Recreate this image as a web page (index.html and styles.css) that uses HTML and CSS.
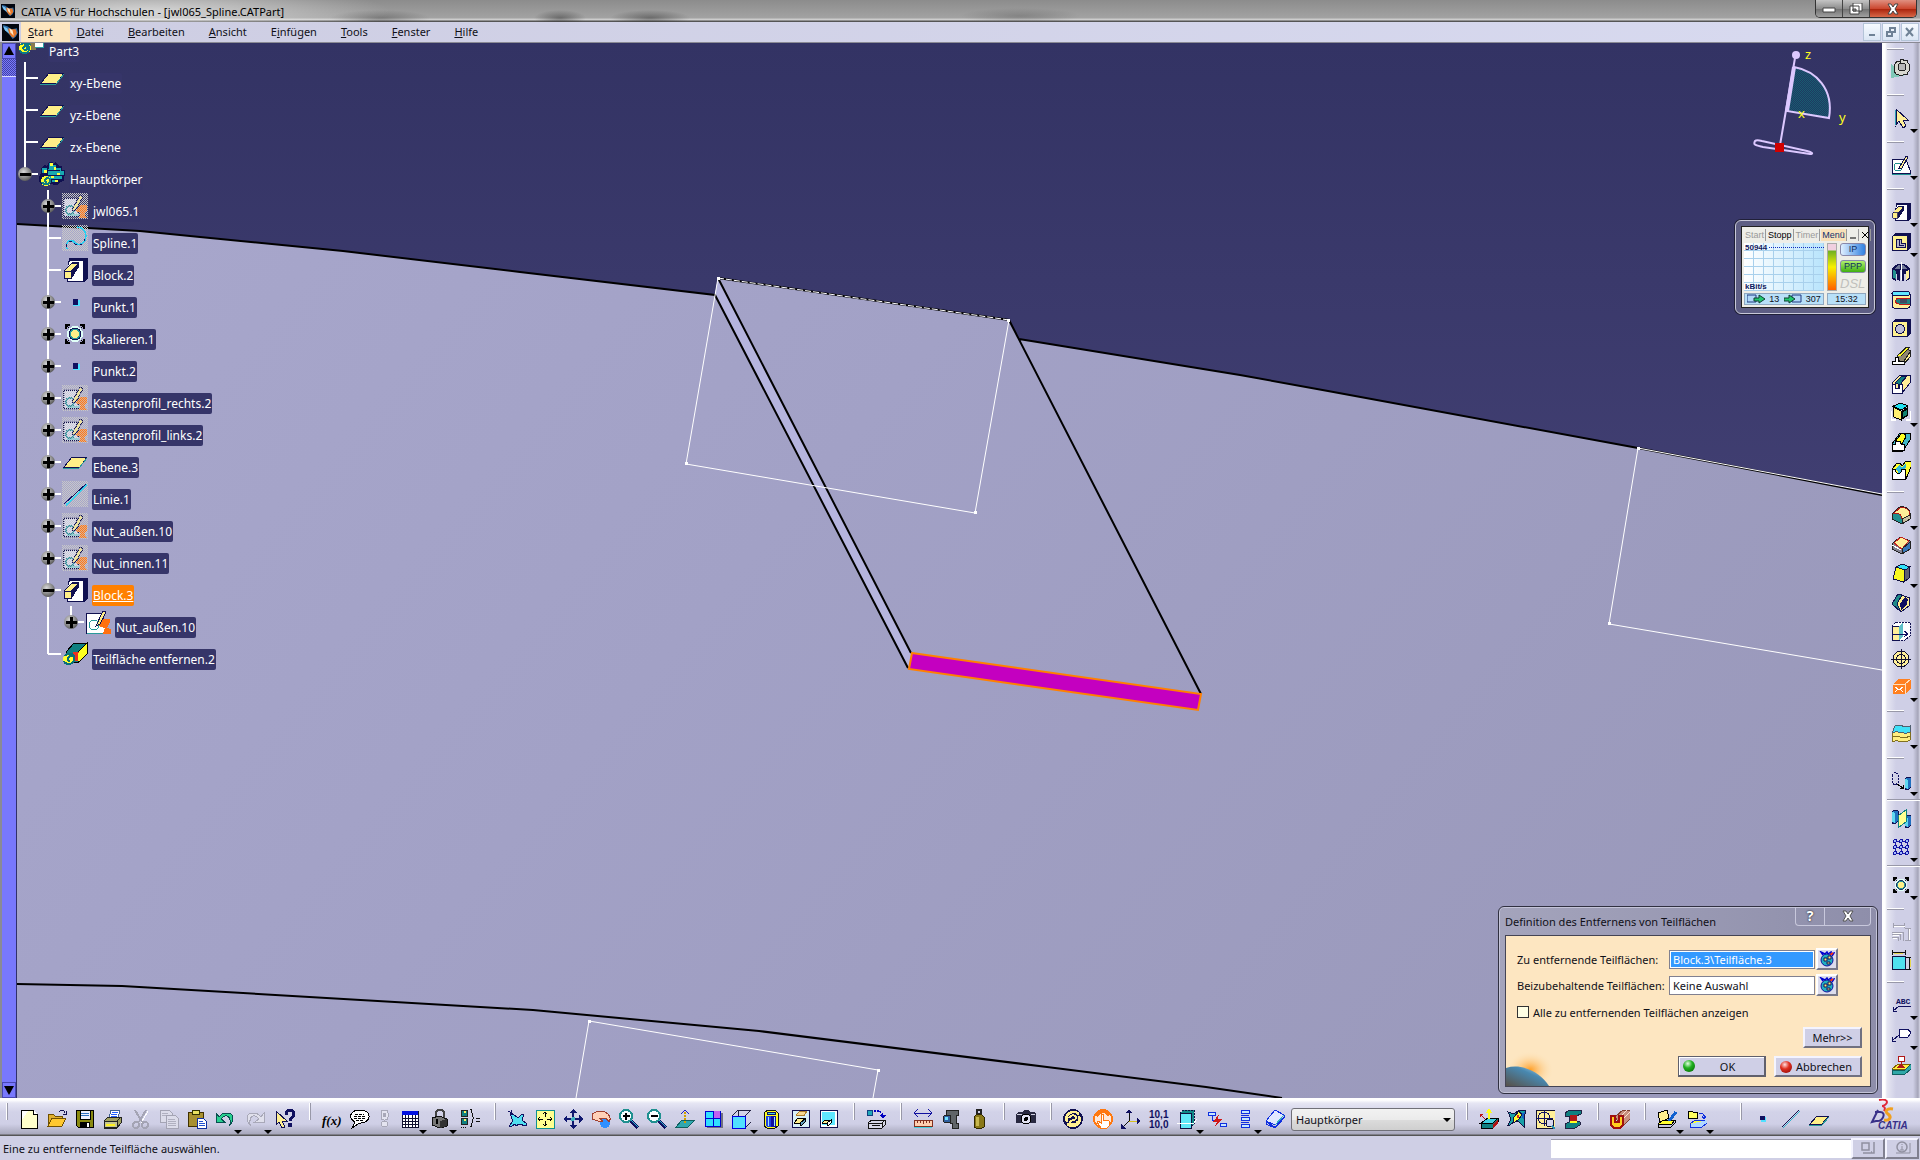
FILE: index.html
```html
<!DOCTYPE html>
<html lang="de">
<head>
    <meta charset="UTF-8">
    <meta name="viewport" content="width=device-width, initial-scale=1.0">
    <title>CATIA V5 für Hochschulen - [jwl065_Spline.CATPart]</title>
    <link rel="stylesheet" href="styles.css">
</head>
<body>
    <!-- Symbole -->
    <svg class="sprite" aria-hidden="true">
        <defs>
            <linearGradient id="g-orb" x1="0" y1="0" x2="1" y2="1"><stop offset="0" stop-color="#3a6ea8"/><stop offset=".45" stop-color="#e8f0ff"/><stop offset=".6" stop-color="#e07020"/><stop offset="1" stop-color="#180800"/></linearGradient>
            <radialGradient id="g-ball" cx=".4" cy=".35" r=".7"><stop offset="0" stop-color="#d8d8d8"/><stop offset="1" stop-color="#555"/></radialGradient>
            <pattern id="p-mesh" width="2" height="2" patternUnits="userSpaceOnUse"><rect width="1" height="1" fill="#c8c8c8"/><rect x="1" y="1" width="1" height="1" fill="#c8c8c8"/></pattern>
            <pattern id="p-teal" width="2" height="2" patternUnits="userSpaceOnUse"><rect width="2" height="2" fill="#1c3c62"/><rect width="1" height="1" fill="#1a5a70"/><rect x="1" y="1" width="1" height="1" fill="#1a5a70"/></pattern>
        </defs>
        <symbol id="i-app" viewBox="0 0 16 16"><path d="M0 0h16v16H0z" fill="#02060f"/><path d="M1 1l4 1 4 3 5-1 1 4-2 4-3 2-3-4-5-5z" fill="#2c6ca8"/><path d="M6 4l3 1 4 0 1 4-3 4-2-1-3-4z" fill="#e87828"/><path d="M7 4l3 2 1 5-3-3z" fill="#ffe8c8"/><path d="M1 2l4 2 2 5-4-3z" fill="#7cc4f0"/></symbol>
        <symbol id="i-plus" viewBox="0 0 14 14"><circle cx="7" cy="7" r="7" fill="url(#g-ball)"/><path d="M2 6h4V2h3v4h4v3H9v4H6V9H2z" fill="#000"/></symbol>
        <symbol id="i-minus" viewBox="0 0 14 14"><circle cx="7" cy="7" r="7" fill="url(#g-ball)"/><path d="M2 6h11v3H2z" fill="#000"/></symbol>

        <!-- Baum -->
        <symbol id="t-part" viewBox="0 0 26 26"><path d="M2 6h10v9H2z" fill="#ffef90"/><path d="M12 8h6v9h-6z" fill="#8a7a50"/><path d="M17 3h9v11h-9z" fill="#fff"/><path d="M17 14h9v1h-9zM25 5h1v10h-1z" fill="#2aa0a0"/><circle cx="7" cy="15" r="6" fill="#ffff20"/><path d="M2 17c1 4 8 4 9 0s-2-6-4-4-3 3 0 4 2-6-1-7M3 12c2-4 8-3 9 0" fill="none" stroke="#0a7a88" stroke-width="2"/></symbol>
        <symbol id="t-plane" viewBox="0 0 26 26"><path d="M2 18L10 8h15l-7 10z" fill="#ffef88" stroke="#101050"/><path d="M1 19h16l8-10" fill="none" stroke="#2a9a9a"/></symbol>
        <symbol id="t-body" viewBox="0 0 26 26"><path d="M10 1h4v2l3-2 3 4h3v4h3v4l-1 4v3l-4 1-2 3h-4l-3-1-8 1-4-3v-5l2-4V7l3-3 3 1z" fill="#101050"/><path d="M10 2h3v2h4v3h5v3h3v4h-2v4h-5v3h-5v-3H9V8h1zM3 7h5v5H3z" fill="#18a8b0"/><path d="M11 2h3v3h-3zM5 9h3v3H5zM15 6h2v4h-2zM18 12h3v3h-3zM12 14h3v3h-3zM16 18h3v3h-3z" fill="#ffff40"/><path d="M9 9h12v1H9zM9 14h14v1H9zM9 18h12v1H9z" fill="#101050"/><circle cx="7" cy="20" r="5" fill="#ffff30"/><path d="M3 21c1 3 7 3 8 0s-2-5-4-3-1 3 1 3" fill="none" stroke="#108080" stroke-width="2"/></symbol>
        <symbol id="t-hidden" viewBox="0 0 26 26"><path d="M0 0h26v26H0z" fill="url(#p-mesh)"/><path d="M2 5h14v19H2z" fill="#dcdcf0" stroke="#101050" stroke-dasharray="1 1" stroke-width="2"/><path d="M5 21h12v2H5z" fill="#7fd0d8"/><path d="M25 12h-7l-4 6 5 2-2 5h8l-3-5 3-3z" fill="#ff7818"/><circle cx="8" cy="17" r="4" fill="none" stroke="#2890a0" stroke-width="2"/><path d="M10 17l8-15 3 2-8 14z" fill="#ffef88" stroke="#101050"/><path d="M0 0h26v26H0z" fill="url(#p-mesh)" opacity=".7"/></symbol>
        <symbol id="t-sketch" viewBox="0 0 26 26"><path d="M1 4h16l4 20H1z" fill="#fff" stroke="#101050"/><path d="M2 24h22v1H2z" fill="#2a9a9a"/><path d="M25 10h-7l-5 7 7 2-2 6h8v-5l-4-1 3-6z" fill="#ff7010"/><circle cx="9" cy="16" r="5" fill="none" stroke="#2a9a9a"/><path d="M11 17l7-15 3 1-6 12z" fill="#ffef88" stroke="#101050"/></symbol>
        <symbol id="t-spline" viewBox="0 0 26 26"><path d="M0 0h26v26H0z" fill="url(#p-mesh)"/><path d="M5 24c-2-6 2-10 6-8 5 6 12 4 13-5 0-5-4-9-9-9" fill="none" stroke="#28d0f0" stroke-width="1.5"/><path d="M5 22c-1-5 3-7 6-5 5 6 10 3 12-3" fill="none" stroke="#101060" stroke-dasharray="3 3"/></symbol>
        <symbol id="t-pad" viewBox="0 0 26 26"><path d="M7 1h19v21l-4 3H5V14z" fill="#101050"/><path d="M8 4h13v20H6V10z" fill="#fff"/><path d="M2 14l8-9h7v5l-7 11H2z" fill="#101050"/><path d="M3 14l6-7h6l-6 7z" fill="#ffef88"/><path d="M2 14h7v7H2z" fill="#ffef88" stroke="#101050"/></symbol>
        <symbol id="t-point" viewBox="0 0 26 26"><path d="M11 11h7v6h-7z" fill="#50e0ff"/><path d="M11 10h5v6h-5z" fill="#101060"/></symbol>
        <symbol id="t-scale" viewBox="0 0 26 26"><path d="M4 4l18 18M22 4L4 22" stroke="#000"/><path d="M4 8V4h4M18 4h4v4M22 18v4h-4M8 22H4v-4" fill="none" stroke="#000" stroke-width="2"/><circle cx="13" cy="13" r="8" fill="#e0fff8"/><circle cx="13" cy="13" r="6" fill="#2a9a9a" stroke="#101050"/><circle cx="13" cy="13" r="4" fill="#ffef88"/></symbol>
        <symbol id="t-line" viewBox="0 0 26 26"><path d="M0 0h26v26H0z" fill="url(#p-mesh)"/><path d="M4 24L25 4" stroke="#30d8f0" stroke-width="1.5"/><path d="M2 23L24 3" stroke="#101060"/></symbol>
        <symbol id="t-remove" viewBox="0 0 26 26"><path d="M4 11L12 2h13v11l-8 8H4z" fill="#108080" stroke="#000"/><path d="M16 11l9-9v11l-8 8z" fill="#ffff20" stroke="#000"/><path d="M11 11h6v9h-6z" fill="#e83020"/><path d="M16 12h2v8h-2z" fill="#ffff20"/><circle cx="7" cy="18" r="6" fill="#ffff30"/><path d="M2 20c1 4 9 4 10-1s-3-5-5-3-1 4 1 4M3 15c2-3 7-3 9 0" fill="none" stroke="#087078" stroke-width="2"/></symbol>

        <!-- Standard -->
        <symbol id="i-new" viewBox="0 0 20 20"><path d="M2 1h12l4 4v14H2z" fill="#ffffcc" stroke="#000"/><path d="M14 1v4h4" fill="#fff" stroke="#000"/><path d="M3 2h6l-6 9z" fill="#fff"/></symbol>
        <symbol id="i-open" viewBox="0 0 20 20"><path d="M1 17V5h5l2 2h7v4" fill="#e0b030" stroke="#705000"/><path d="M1 17l4-8h14l-4 8z" fill="#ffc830" stroke="#705000"/><path d="M12 3c2-3 5-2 6 1M19 2v3h-3" fill="none" stroke="#101050"/></symbol>
        <symbol id="i-save" viewBox="0 0 20 20"><path d="M1 1h17v17H3l-2-2z" fill="#8a8a10" stroke="#000"/><path d="M5 1h10v9H5z" fill="#eef" stroke="#000"/><path d="M6 4h8M6 6h8" stroke="#3070c0"/><path d="M5 13h10v5H5z" fill="#000"/><path d="M12 14h2v4h-2z" fill="#fff"/></symbol>
        <symbol id="i-print" viewBox="0 0 20 20"><path d="M6 9l2-8h9l-2 8z" fill="#fff" stroke="#406090"/><path d="M9 3h6M8 5h6M8 7h6" stroke="#2060ff"/><path d="M1 12l4-4h13v6l-4 5H1z" fill="#a0a060" stroke="#222"/><path d="M1 12h13v6H1zM14 12l4-4" fill="#c8c890" stroke="#222"/><path d="M3 15h9v2H3z" fill="#fff020"/></symbol>
        <symbol id="i-cut" viewBox="0 0 20 20"><g fill="none" stroke="#fff"><path d="M5 2l7 12M17 2l-7 12"/></g><g fill="none" stroke="#a4a4b4" stroke-width="2"><path d="M4 1l7 12M15 1L8 13"/><circle cx="5" cy="16" r="3"/><circle cx="14" cy="16" r="3"/></g></symbol>
        <symbol id="i-copy" viewBox="0 0 20 20"><g fill="#dcdcea" stroke="#a4a4b4"><path d="M1 1h9l3 3v9H1z"/><path d="M7 6h9l3 3v10H7z"/></g><path d="M3 4h6M3 6h4M9 10h7M9 12h8M9 14h8M9 16h8" stroke="#b0b0c0"/></symbol>
        <symbol id="i-paste" viewBox="0 0 20 20"><path d="M1 3h15v14H1z" fill="#a89030" stroke="#403000"/><path d="M5 1h7v4H5z" fill="#e8e060" stroke="#303000"/><path d="M10 9h6l3 3v7h-9z" fill="#fff" stroke="#1030a0"/><path d="M12 12h4M12 14h6M12 16h6" stroke="#2050d0"/></symbol>
        <symbol id="i-undo" viewBox="0 0 20 20"><path d="M1 4v9h9l-4-3c5-6 10-3 9 5l-1 2c6-6 5-13-2-13-4 0-6 1-8 4z" fill="#28d090" stroke="#085050"/></symbol>
        <symbol id="i-redo" viewBox="0 0 20 20"><path d="M19 4v9h-9l4-3c-5-6-10-3-9 5l1 2C0 11 1 4 8 4c4 0 6 1 8 4z" fill="#e0e0ec" stroke="#a8a8b8"/></symbol>
        <symbol id="i-what" viewBox="0 0 20 20"><path d="M1 2v14l3-3 3 6 3-1-3-6h5z" fill="#ffef90" stroke="#101050"/><path d="M11 6c0-6 8-6 8-1 0 4-4 3-4 7" fill="none" stroke="#101060" stroke-width="3"/><path d="M13 14h4v4h-4z" fill="#101060"/></symbol>

        <!-- Wissen -->
        <symbol id="i-note" viewBox="0 0 20 20"><path d="M10 1c12 0 12 12 1 13l-3 1-6 4 3-6C-3 8 1 1 10 1z" fill="#fff" stroke="#000"/><path d="M5 5h9M4 7h12M4 9h12M6 11h8" stroke="#000" stroke-dasharray="3 1"/></symbol>
        <symbol id="i-lamp" viewBox="0 0 20 20"><g fill="#e4e4f0" stroke="#a8a8b8"><rect x="6" y="1" width="7" height="10" rx="3"/><circle cx="9.500" cy="15" r="3"/></g><path d="M8 4h3v4H8z" fill="#a8a8b8"/></symbol>
        <symbol id="i-table" viewBox="0 0 20 20"><path d="M2 2h16v16H2z" fill="#fff" stroke="#101030"/><path d="M2 2h16v4H2z" fill="#0010e0"/><path d="M2 9h16M2 12h16M2 15h16M5 6v12M8 6v12M12 6v12M15 6v12" stroke="#101030"/></symbol>
        <symbol id="i-lock" viewBox="0 0 20 20"><path d="M6 9V4c0-4 8-4 8 0v6" fill="none" stroke="#444" stroke-width="2"/><path d="M2 9l7-2 8 3v7l-7 2-8-3z" fill="#777" stroke="#111"/><path d="M10 12l7-2v7l-7 2z" fill="#333"/><path d="M6 10h2v5H6z" fill="#000"/></symbol>
        <symbol id="i-list" viewBox="0 0 20 20"><path d="M1 1h6v6H1zM1 9h6v6H1z" fill="#108080" stroke="#222"/><path d="M4 2h2v2H4zM4 10h2v2H4z" fill="#ffef60"/><path d="M1 18h1M3 18h1M5 18h1M10 0c4 0 0 8 4 9-4 1 0 9-4 9M16 9h4M16 12h4" fill="none" stroke="#111"/></symbol>

        <!-- Ansicht -->
        <symbol id="i-fly" viewBox="0 0 20 20"><path d="M3 5l3 0 5 4 4-4h2l-2 6 5 4-1 2-7-2-3 2-1-2-4 3-2-1 4-5z" fill="#50e0f0" stroke="#101060"/><path d="M1 2l5 3M5 1L3 6" stroke="#101060"/></symbol>
        <symbol id="i-fit" viewBox="0 0 20 20"><path d="M1 1h18v18H1z" fill="#ffff90" stroke="#109090"/><path d="M10 3v5M8 5l2-2 2 2M10 17v-5M8 15l2 2 2-2M3 10h5M5 8l-2 2 2 2M17 10h-5M15 8l2 2-2 2" fill="none" stroke="#000"/></symbol>
        <symbol id="i-pan" viewBox="0 0 20 20"><path d="M10 0l4 4h-3v5h5V6l4 4-4 4v-3h-5v5h3l-4 4-4-4h3v-5H4v3l-4-4 4-4v3h5V4H6z" fill="#101870"/><circle cx="10" cy="10" r="2" fill="#40b0c0"/></symbol>
        <symbol id="i-rotate" viewBox="0 0 20 20"><circle cx="14" cy="14" r="5" fill="#3090ff"/><path d="M1 5c4-3 12-4 16 0 2 2 3 5 1 8l-3-4H8l4 3-2 1-9-3z" fill="#ffd0b8" stroke="#a04030"/></symbol>
        <symbol id="i-zoomin" viewBox="0 0 20 20"><path d="M12 12l7 7" stroke="#101060" stroke-width="4"/><path d="M12 11l7 7" stroke="#30b8d0" stroke-width="1"/><circle cx="7" cy="7" r="6" fill="#f8ffff" stroke="#209090" stroke-width="2"/><path d="M4 7h7M7 4v7" stroke="#000" stroke-width="2"/></symbol>
        <symbol id="i-zoomout" viewBox="0 0 20 20"><path d="M12 12l7 7" stroke="#101060" stroke-width="4"/><path d="M12 11l7 7" stroke="#30b8d0" stroke-width="1"/><circle cx="7" cy="7" r="6" fill="#f8ffff" stroke="#209090" stroke-width="2"/><path d="M4 7h7" stroke="#000" stroke-width="2"/></symbol>
        <symbol id="i-normal" viewBox="0 0 20 20"><path d="M1 18l6-7h13l-7 7z" fill="#30a8b0" stroke="#106060"/><path d="M10 14V3" stroke="#d0a000" stroke-width="2" stroke-dasharray="2 1"/><path d="M6 5l4-4 4 4" fill="none" stroke="#2020c0"/></symbol>
        <symbol id="i-multi" viewBox="0 0 20 20"><path d="M4 4h16v15H4z" fill="#707080"/><path d="M2 2h15v15H2z" fill="#30e0ff" stroke="#0000d0"/><path d="M10 2h7v7h-7z" fill="#c060f0"/><path d="M10 2v15M2 9h15" stroke="#0000d0"/></symbol>
        <symbol id="i-cube" viewBox="0 0 20 20"><path d="M1 7l6-6h13v12l-6 6" fill="none" stroke="#202040"/><path d="M14 7l6-6M7 1v6" stroke="#202040"/><path d="M1 7h13v12H1z" fill="#50e0ff" stroke="#0000e0"/></symbol>
        <symbol id="i-shade" viewBox="0 0 20 20"><path d="M3 4l4-3h7l3 3v13l-3 2H6l-3-2z" fill="#ffff20" stroke="#101010"/><path d="M5 7h5v11H6l-1-1z" fill="#2040e0"/><path d="M10 7h5v11h-5z" fill="#1010a0"/><path d="M6 3h8v2H6z" fill="#40d8f0" stroke="#101060"/><path d="M7 8v9M13 8v9" stroke="#a0e8ff"/></symbol>
        <symbol id="i-hide" viewBox="0 0 20 20"><path d="M1 1h17v17H1z" fill="#d8f0f8" stroke="#101050"/><path d="M5 6l4-4h7l-3 5z" fill="#f8d890" stroke="#b08030"/><path d="M3 14l4-5h7l-4 6z" fill="#ffef90" stroke="#000"/><path d="M9 14l5-4v3l-4 4z" fill="#60a0c0" stroke="#000"/></symbol>
        <symbol id="i-swap" viewBox="0 0 20 20"><path d="M1 1h17v17H1z" fill="#fff" stroke="#101050"/><path d="M3 3h13v13H3z" fill="#60e8ff"/><path d="M3 14l3-3h5l-2 4z" fill="#ffef90" stroke="#000"/><path d="M8 14l4-3v3l-3 3z" fill="#fff" stroke="#000"/></symbol>
        <symbol id="i-apply" viewBox="0 0 20 20"><circle cx="4" cy="4" r="3" fill="#20a8b8" stroke="#104080"/><path d="M8 2h6l3 5" fill="none" stroke="#0000c0" stroke-width="2" stroke-dasharray="2 1"/><path d="M13 6h7l-3 4z" fill="#0000c0"/><path d="M2 14l4-3h13v5l-3 3H2z" fill="#d8d8e8" stroke="#111"/><path d="M2 14h14v5M16 14l3-3M6 16h8" fill="none" stroke="#111"/></symbol>
        <symbol id="i-measure" viewBox="0 0 20 20"><path d="M1 4h18M5 0L1 4l4 4M15 0l4 4-4 4" fill="none" stroke="#1010a0"/><path d="M1 11h18v6H1z" fill="#ffd0b0" stroke="#803020"/><path d="M4 11v3M7 11v3M10 11v4M13 11v3M16 11v3" stroke="#803020"/><path d="M1 18h18" stroke="#40d0e0"/></symbol>
        <symbol id="i-caliper" viewBox="0 0 20 20"><path d="M5 1h12v5h-2v8h2v5h-6v-5h-2V6H5z" fill="#606468" stroke="#222"/><circle cx="6" cy="10" r="4" fill="#3060a0" stroke="#222"/><path d="M4 8h3v3H4z" fill="#70e0ff"/></symbol>
        <symbol id="i-weight" viewBox="0 0 20 20"><circle cx="10" cy="3" r="2.500" fill="none" stroke="#222" stroke-width="2"/><path d="M8 5h4l3 3v10l-2 1H7l-2-1V8z" fill="#8a7818" stroke="#302800"/><path d="M7 8h3v9H7z" fill="#c8b850"/></symbol>
        <symbol id="i-camera" viewBox="0 0 20 20"><path d="M0 5l2-2h4l2-2h5l1 2h4l2 2v9H0z" fill="#282840"/><path d="M1 5h5M15 5h4" stroke="#d0d0e0"/><circle cx="10" cy="10" r="5" fill="#e0e0f0" stroke="#000"/><circle cx="10" cy="10" r="2" fill="#000"/></symbol>

        <!-- Werkzeuge -->
        <symbol id="i-update" viewBox="0 0 20 20"><circle cx="10" cy="10" r="10" fill="#101050"/><path d="M4 13C1 5 10 0 16 5M16 7c3 8-6 13-12 8" fill="none" stroke="#ffef90" stroke-width="2.500"/><path d="M6 9c2-4 7-3 7 0s-5 1-6 4c1 4 6 3 8-1" fill="none" stroke="#ffef90" stroke-width="2"/></symbol>
        <symbol id="i-hand" viewBox="0 0 20 20"><circle cx="10" cy="10" r="9" fill="#ffe8d8" stroke="#ff7810" stroke-width="2"/><path d="M3 5c3-4 10-5 14 0l-2 3-4-4-4 1-3 3z" fill="#ff7810"/><path d="M8 19l-4-6 1-1 3 2V5h2v6l6 1v5l-2 2z" fill="#fff" stroke="#ff7810"/></symbol>
        <symbol id="i-axis" viewBox="0 0 20 20"><path d="M8 2v10h10M8 12l-7 7" fill="none" stroke="#101010"/><path d="M5 4l3-4 3 4zM16 9l4 3-4 3zM0 15v5h5z" fill="#101060"/><path d="M8 12h8" stroke="#d8c020"/></symbol>
        <symbol id="i-defn" viewBox="0 0 20 20"><path d="M3 4l3-3h11v14l-3 4H3z" fill="#108888" stroke="#101040" stroke-dasharray="2 1"/><path d="M3 4h11v15H3z" fill="#60e8f8" stroke="#101040"/><path d="M0 14h17l3-4" fill="none" stroke="#fff"/></symbol>
        <symbol id="i-cutlink" viewBox="0 0 20 20"><path d="M1 3h7v3H1zM13 14h6v3h-6z" fill="#c8e8ff" stroke="#1030e0"/><path d="M5 7v4h3" fill="none" stroke="#1030e0"/><path d="M12 5l-6 8h4l-3 6 8-9h-4z" fill="#d01818"/></symbol>
        <symbol id="i-stack" viewBox="0 0 20 20"><path d="M6 1h8v3H6zM6 8h8v3H6zM6 15h8v3H6z" fill="#c8e8ff" stroke="#1030e0"/><path d="M6 6h8M6 13h8" stroke="#1030e0"/></symbol>
        <symbol id="i-cat" viewBox="0 0 20 20"><path d="M1 12L10 1l9 5-9 10z" fill="#e0e8ff" stroke="#1030e0"/><path d="M1 12v3l9 4 9-10V6M1 13l9 5 9-10" fill="none" stroke="#1030e0"/><path d="M10 16l9-10" stroke="#30b0c0"/></symbol>

        <!-- Analyse -->
        <symbol id="i-draftan" viewBox="0 0 20 20"><path d="M2 14l7-5h10v4l-5 6H2z" fill="#108080" stroke="#000"/><path d="M14 19v-4l5-5v4z" fill="#b01010"/><path d="M2 14h12l5-5H9z" fill="#40d0e0" stroke="#000"/><path d="M10 10V2M8 4l2-3 2 3" fill="none" stroke="#ffff20" stroke-width="2"/><path d="M6 10L1 5M1 8V5h3" fill="none" stroke="#c01010"/></symbol>
        <symbol id="i-curve" viewBox="0 0 20 20"><path d="M1 3l6 2 5-4 7 1-2 6v10l-5-5-5-1-4 4H1l3-6z" fill="#18a0a8" stroke="#101040"/><path d="M7 8l5-6 3 4-4 5-5 3z" fill="#ffff30" stroke="#101040"/><path d="M10 6h2v3h-2z" fill="#e03020"/><path d="M15 4l3-1-2 10z" fill="#1060c0"/></symbol>
        <symbol id="i-tap" viewBox="0 0 20 20"><path d="M1 1h19v18H1z" fill="#ffef98" stroke="#101030"/><circle cx="9" cy="9" r="6" fill="none" stroke="#101060"/><path d="M9 1v16M1 9h17" stroke="#101060"/><circle cx="15" cy="14" r="4" fill="#d8d8f0" stroke="#101030"/><path d="M17 17l3 3" stroke="#3090b0" stroke-width="2"/></symbol>
        <symbol id="i-beam" viewBox="0 0 20 20"><path d="M2 4l5-3h11v4l-5 2v5l4 1v3l-5 3H2v-4l4-2V7H2z" fill="#108080" stroke="#224"/><path d="M7 6h7v7H7z" fill="#b01818"/><path d="M7 12h7v2H7z" fill="#ffff20"/></symbol>
        <symbol id="i-insert" viewBox="0 0 20 20"><path d="M5 8l8-7h7v9l-8 8z" fill="#c89080" stroke="#804030"/><path d="M9 9l8-8M14 9l6-6" stroke="#ffe0d0"/><path d="M1 7h4v6h4V7h4v9l-3 3H4l-3-3z" fill="#ffd020" stroke="#a01010" stroke-width="1.500"/></symbol>
        <symbol id="i-paper" viewBox="0 0 20 20"><path d="M1 4l9-3 2 8-9 5z" fill="#ffef90" stroke="#000"/><path d="M1 15l5-4h12l-4 5z" fill="#ffff30" stroke="#000"/><path d="M1 15v3h13l4-4v-3" fill="none" stroke="#000"/><path d="M12 12l7-9" stroke="#1060d0" stroke-width="3"/></symbol>
        <symbol id="i-power" viewBox="0 0 20 20"><path d="M1 2h4l1 1h4v6H1z" fill="#ffff60" stroke="#000"/><path d="M12 4c4 0 6 2 5 5M15 7l2 3 2-3" fill="none" stroke="#1030e0"/><path d="M3 15l5-4h12l-5 5z" fill="#ffff30" stroke="#1030e0"/><path d="M3 15v3h12l5-4v-3" fill="#b0d8ff" stroke="#1030e0"/></symbol>
        <symbol id="i-point" viewBox="0 0 20 20"><path d="M8 8h5v5H8z" fill="#50e0ff"/><path d="M7 7h5v4H7z" fill="#101060"/></symbol>
        <symbol id="i-line" viewBox="0 0 20 20"><path d="M1 18L18 1" stroke="#101050" stroke-width="1"/><path d="M2 19L19 2" stroke="#30b0c8"/></symbol>
        <symbol id="i-plane" viewBox="0 0 20 20"><path d="M1 15l7-8h12l-7 8z" fill="#ffef88" stroke="#101050"/><path d="M0 16h13l7-8" fill="none" stroke="#2a9a9a"/></symbol>

        <!-- Seitenleiste -->
        <symbol id="i-gear" viewBox="0 0 20 20"><path d="M0 6l15 11-15 3z" fill="#80c8b8"/><path d="M9 1h3l1 2 3-1 1 3 2 2-1 3 1 2-2 2-1 3-3-1-2 2-3-1-3-1-2-3V9l1-3 2-3 3 1z" fill="#d8d8d0" stroke="#222"/><circle cx="11" cy="9" r="4" fill="#b8b8b8" stroke="#222"/></symbol>
        <symbol id="i-select" viewBox="0 0 20 20"><path d="M5 1v16l3-4 4 7 3-2-3-6h5z" fill="#ffef98" stroke="#101050"/><path d="M4 2v15" stroke="#30a0b0"/></symbol>
        <symbol id="i-sketch" viewBox="0 0 20 20"><path d="M1 4h14l5 14H1z" fill="#fff" stroke="#101050"/><path d="M1 19h19" stroke="#209090"/><circle cx="7" cy="12" r="4" fill="none" stroke="#209090"/><path d="M8 13l7-12 2 1-6 11z" fill="#ffef90" stroke="#101050"/></symbol>
        <symbol id="i-pocket" viewBox="0 0 20 20"><path d="M1 4l3-3h16v14l-3 4H1z" fill="#101050"/><path d="M2 4h14v14H2z" fill="#fff290"/><path d="M5 7h5v4h4v4H5z" fill="#b8b8c8" stroke="#101050"/><path d="M8 8v5h5" fill="none" stroke="#101050"/></symbol>
        <symbol id="i-shaft" viewBox="0 0 20 20"><path d="M1 8c0-3 3-6 9-6s9 3 9 6v9l-4 2v-7l-2 0v7h-2V8H9v11l-3-1v-6L5 12v7l-4-2z" fill="#101050"/><path d="M2 8l3 1v8l-3-1z" fill="#209090"/><path d="M15 9l3-1v8l-3 2z" fill="#ffef98"/><path d="M4 7c1-3 3-4 5-4v4zM11 3c2 0 4 1 5 4h-5z" fill="#707898"/><path d="M10 0v18" stroke="#fff"/></symbol>
        <symbol id="i-groove" viewBox="0 0 20 20"><path d="M1 4c0-4 18-4 18 0v12c0 4-18 4-18 0z" fill="#ffef98" stroke="#101050"/><ellipse cx="10" cy="3.500" rx="9" ry="2.500" fill="#60e8ff" stroke="#101050"/><path d="M19 8H8c-5 1-4 6 0 6h11" fill="#208080" stroke="#c01818" stroke-width="1"/><path d="M9 9h7v4H9z" fill="#404860"/></symbol>
        <symbol id="i-hole" viewBox="0 0 20 20"><path d="M1 4l3-3h16v14l-3 4H1z" fill="#101050"/><path d="M2 4h14v14H2z" fill="#fff290"/><circle cx="9" cy="11" r="4.500" fill="#c0c0d8" stroke="#101050"/></symbol>
        <symbol id="i-rib" viewBox="0 0 20 20"><path d="M5 12L15 1l5 5-8 11z" fill="#908870" stroke="#222"/><path d="M6 10L16 1h3l-9 9" fill="#ffff20" stroke="#222"/><path d="M1 18v-3h3v-4h3v4h6v3z" fill="#fff" stroke="#000"/><path d="M13 15l6-9v5l-6 7z" fill="#ffef90" stroke="#222"/></symbol>
        <symbol id="i-slot" viewBox="0 0 20 20"><path d="M1 9l8-8h11l-1 8-8 10H1z" fill="#ffef98" stroke="#101050"/><path d="M4 9l7-7h5l-6 7v6H7v-5z" fill="#108080" stroke="#101050"/><path d="M1 10h3v4h4v-4h3v9H1z" fill="#fff" stroke="#101050"/></symbol>
        <symbol id="i-solid" viewBox="0 0 20 20"><path d="M10 1l7 3-7 4-8-4z" fill="#20e0f0" stroke="#000"/><path d="M2 5l8 4v9l-7-3z" fill="#ffef70" stroke="#000"/><path d="M17 5l-7 4v9l7-4z" fill="#000"/><path d="M12 10l4-2v5l-4 2z" fill="#108070"/><path d="M0 9v9h5M20 9v9h-5" fill="none" stroke="#fff" stroke-width="2"/></symbol>
        <symbol id="i-loft" viewBox="0 0 20 20"><path d="M1 12L9 1h10v7l-7 11H1z" fill="#40b8c8" stroke="#000"/><path d="M4 10l6-8c2-2 5 0 5 3l-5 8z" fill="#ffff20" stroke="#000"/><path d="M1 12h3c0-4 6-4 6 0h3v6H1z" fill="#fff" stroke="#000"/></symbol>
        <symbol id="i-unloft" viewBox="0 0 20 20"><path d="M1 9l5-6h3l2 3 4-5h5v6l-5 12H1z" fill="#ffff30" stroke="#000"/><path d="M5 9l3-4 3 3 4-5v4l-6 8z" fill="#30b8d8"/><path d="M1 9h3c1 6 6 6 7 0h3v10H1z" fill="#fff" stroke="#000"/></symbol>
        <symbol id="i-fillet" viewBox="0 0 20 20"><path d="M1 9l6-6c4-3 12 0 12 5v5l-8 6-10-5z" fill="#209090" stroke="#222"/><path d="M3 8l7-6c5 0 9 3 9 8l-8 4c0-4-3-6-8-6z" fill="#ffef98" stroke="#b01818"/><path d="M11 14l8-4v4l-8 5z" fill="#c8c0a0" stroke="#222"/></symbol>
        <symbol id="i-chamfer" viewBox="0 0 20 20"><path d="M1 9L9 2l10 4v8l-8 5-10-5z" fill="#808090" stroke="#222"/><path d="M3 8l7-6 8 4-7 8z" fill="#ffef98" stroke="#c02020"/><path d="M11 14l8-7v7l-8 5z" fill="#3878b8" stroke="#222"/><path d="M1 10l9 5" stroke="#fff"/></symbol>
        <symbol id="i-draft" viewBox="0 0 20 20"><path d="M5 4l6-3 8 3-5 3z" fill="#30e0f8" stroke="#101040"/><path d="M5 4l9 3-1 12-11-3z" fill="#f8f820" stroke="#101040"/><path d="M14 7l5-3-1 11-5 4z" fill="#606070" stroke="#101040"/></symbol>
        <symbol id="i-shell" viewBox="0 0 20 20"><path d="M1 11L7 1l12 4-1 8-8 6z" fill="#ffef90" stroke="#101050"/><path d="M1 11L7 1l4 1-5 9 4 8z" fill="#208888" stroke="#101050"/><path d="M9 11l5-7 3 2-1 5-6 6z" fill="#101060"/></symbol>
        <symbol id="i-thick" viewBox="0 0 20 20"><path d="M1 5l4-4h14v14l-5 4H1z" fill="#fff" stroke="#101050" stroke-dasharray="2 1"/><path d="M1 5h7v14H1z" fill="#ffef98" stroke="#101050"/><path d="M8 5l4-4v14l-4 4z" fill="#60c0c8"/><path d="M2 13h14M13 10l4 3-4 3" fill="none" stroke="#101060"/></symbol>
        <symbol id="i-thread" viewBox="0 0 20 20"><circle cx="10" cy="10" r="8" fill="#ffef98" stroke="#101030"/><circle cx="10" cy="10" r="4.500" fill="none" stroke="#101030"/><path d="M10 0v20M0 10h20" stroke="#101030"/></symbol>
        <symbol id="i-remove" viewBox="0 0 20 20"><path d="M2 7l6-5h12v9l-6 6H2z" fill="#ff8020"/><path d="M2 7h12v10M14 7l6-5" fill="none" stroke="#ffe0c0"/><path d="M4 10l3 2-3 3M12 10l-3 2 3 3M6 12h4" fill="none" stroke="#fff"/></symbol>
        <symbol id="i-surface" viewBox="0 0 20 20"><path d="M1 9c5-5 8 3 18-1v8c-8 5-12-2-18 2z" fill="#ffef80" stroke="#807020"/><path d="M1 13c5-4 9 4 18-1" fill="none" stroke="#807020"/><path d="M1 9L4 2c6-3 9 3 15 0v6C13 12 6 5 1 9z" fill="#40e0f8" stroke="#506070"/></symbol>
        <symbol id="i-translate" viewBox="0 0 20 20"><path d="M1 4l3-3 3 2v9l-3 2-3-2z" fill="none" stroke="#101060" stroke-dasharray="2 1"/><path d="M6 13l6 4M9 17h3v-3" fill="none" stroke="#000"/><path d="M14 8l2-2 4 1v9l-3 3-3-1z" fill="#2070c0" stroke="#101050"/><path d="M14 8l3 1v9l-3-1z" fill="#60d8f0"/></symbol>
        <symbol id="i-mirror" viewBox="0 0 20 20"><path d="M1 3l2-2 4 1v10l-3 3-3-1zM14 8l2-2 4 1v9l-3 3-3-1z" fill="#2070c0" stroke="#101050"/><path d="M1 3l3 1v10l-3-1zM14 8l3 1v9l-3-1z" fill="#60d8f0"/><path d="M7 7l8-6v12l-8 6z" fill="#ffff90" stroke="#108080"/></symbol>
        <symbol id="i-pattern" viewBox="0 0 20 20"><path d="M4 3v15M10 3v15M16 3v15M3 4h15M3 10h15M3 16h15" stroke="#1818b0"/><g fill="#a0b8ff" stroke="#1010a0"><circle cx="4" cy="4" r="1.500"/><circle cx="10" cy="4" r="1.500"/><circle cx="16" cy="4" r="1.500"/><circle cx="4" cy="10" r="1.500"/><circle cx="10" cy="10" r="1.500"/><circle cx="16" cy="10" r="1.500"/><circle cx="4" cy="16" r="1.500"/><circle cx="10" cy="16" r="1.500"/><circle cx="16" cy="16" r="1.500"/></g></symbol>
        <symbol id="i-cgray" viewBox="0 0 20 20"><path d="M2 1v5M13 1v5M2 3h11M14 6h6M14 18h6M17 6v12M1 10h11v9M1 12h8v6M1 15h6v4" fill="none" stroke="#a0a0b0"/><path d="M3 4h11M18 7v11M2 11h9M2 13h6M2 16h4" fill="none" stroke="#fff"/></symbol>
        <symbol id="i-constr" viewBox="0 0 20 20"><path d="M1 0v5M14 0v5M1 2h13M15 7h5M15 19h5M18 7v12" fill="none" stroke="#101010"/><path d="M3 3h9M19 9v8" stroke="#e8d850"/><path d="M1 6h13v13H1z" fill="#50e0f0" stroke="#101040"/></symbol>
        <symbol id="i-flag" viewBox="0 0 20 20"><path d="M8 4h9l3 4-3 4H8z" fill="#fff" stroke="#101060"/><path d="M8 10l-6 5M1 12v4h4" fill="none" stroke="#101060"/></symbol>
        <symbol id="i-stamp" viewBox="0 0 20 20"><path d="M1 14l6-5h13l-6 6z" fill="#ffef40" stroke="#806000"/><path d="M1 14v5h13l6-5V9l-6 6H1z" fill="#30a8a8" stroke="#106060"/><path d="M7 1h6v5H7z" fill="#fff" stroke="#b01818"/><path d="M10 6v4M7 12l3-3 3 3z" fill="#b01818" stroke="#b01818"/></symbol>
        <symbol id="i-pick" viewBox="0 0 16 16"><path d="M4 4L2 1l4 2 2-2 1 2 3-2v2l3-1-2 3" fill="none" stroke="#0000d0" stroke-width="1.500"/><path d="M11 4l3-2" stroke="#ff3010" stroke-width="2"/><circle cx="8" cy="9" r="6" fill="#20b0c0" stroke="#1010a0"/><path d="M9 5h3v3H9zM5 7h3v3H5zM8 11h3v2H8z" fill="#ffef70" stroke="#101060"/></symbol>
    </svg>

    <div class="window">
        <header class="title-bar">
            <svg class="app-icon"><use href="#i-app"/></svg>
            <h1>CATIA V5 für Hochschulen - [jwl065_Spline.CATPart]</h1>
            <div class="window-buttons">
                <button aria-label="Minimieren"><svg viewBox="0 0 14 12"><path d="M1 5h12v4H1z" fill="#fff" stroke="#444"/></svg></button>
                <button aria-label="Verkleinern"><svg viewBox="0 0 14 12"><path d="M4 0h9v8H4zM1 3h9v8H1z" fill="#fff" stroke="#444"/><path d="M4 6h3v2H4z" fill="#999" stroke="#444"/></svg></button>
                <button class="close" aria-label="Schließen"><svg viewBox="0 0 14 12"><path d="M2 1h3l2 3 2-3h3L9 6l3 5H9L7 8l-2 3H2l3-5z" fill="#fff" stroke="#444"/></svg></button>
            </div>
        </header>

        <nav class="menu-bar">
            <svg class="doc-icon"><use href="#i-app"/></svg>
            <a class="active" href="#start"><u>S</u>tart</a>
            <a href="#datei"><u>D</u>atei</a>
            <a href="#bearbeiten"><u>B</u>earbeiten</a>
            <a href="#ansicht"><u>A</u>nsicht</a>
            <a href="#einfuegen">E<u>i</u>nfügen</a>
            <a href="#tools"><u>T</u>ools</a>
            <a href="#fenster"><u>F</u>enster</a>
            <a href="#hilfe"><u>H</u>ilfe</a>
            <div class="mdi-buttons">
                <button aria-label="Dokument minimieren"><svg viewBox="0 0 10 10"><path d="M2 8h6" stroke="#6f8296" stroke-width="2"/></svg></button>
                <button aria-label="Dokument wiederherstellen"><svg viewBox="0 0 10 10"><path d="M4 5V1h5v4H6M1 5h5v4H1z" fill="none" stroke="#6f8296" stroke-width="2"/></svg></button>
                <button aria-label="Dokument schließen"><svg viewBox="0 0 10 10"><path d="M1 1l7 8M8 1L1 9" stroke="#6f8296" stroke-width="2"/></svg></button>
            </div>
        </nav>

        <div class="workspace">
            <div class="scroll-track">
                <button aria-label="Nach oben"><svg viewBox="0 0 10 10"><path d="M5 0l5 9H0z"/></svg></button>
                <div class="scroll-mesh"></div>
                <div class="scroll-thumb"></div>
                <button aria-label="Nach unten"><svg viewBox="0 0 10 10"><path d="M5 10L0 1h10z"/></svg></button>
            </div>

            <main class="viewport">
                <!-- 3D-Szene -->
                <svg class="scene" viewBox="17 43 1865 1055" preserveAspectRatio="xMinYMin slice" aria-hidden="true">
                    <defs>
                        <linearGradient id="sky" x1="0" y1="0" x2="0" y2="1"><stop offset="0" stop-color="#333364"/><stop offset=".45" stop-color="#413f72"/></linearGradient>
                        <linearGradient id="skin" x1="0" y1=".2" x2="1" y2=".6"><stop offset="0" stop-color="#a7a6cb"/><stop offset=".4" stop-color="#a2a1c6"/><stop offset="1" stop-color="#9a99bb"/></linearGradient>
                    </defs>
                    <path d="M17 43h1865v1055H17z" fill="url(#sky)"/>
                    <path d="M17 224L140 231L200 237L343 251L520 272L715 295L718 278L1009 320L1019 339L1240 375L1328 391L1638 448L1882 495V1098H17z" fill="url(#skin)"/>
                    <path d="M718 278L715 295L908 668L912 653z" fill="#b5b4de"/>
                    <g fill="none" stroke="#000" stroke-width="2">
                        <path d="M17 224L140 231L200 237L343 251L520 272L715 295L908 668M718 278L911 653M718 278L1009 320L1201 694M1019 339L1240 375L1328 391L1638 448L1882 495"/>
                        <path d="M17 984L122 986L533 1010L759 1031L1047 1067L1206 1087L1282 1098"/>
                    </g>
                    <g fill="none" stroke="#fff">
                        <path d="M718 278L686 464L975 513L1009 320"/>
                        <path d="M718 278L1009 320" stroke-dasharray="6 2"/>
                        <path d="M1882 494L1638 448L1609 624L1882 670"/>
                        <path d="M576 1098L589 1021L878 1070L873 1098"/>
                    </g>
                    <path d="M717 277h3v3h-3zM1007 319h3v3h-3zM974 511h3v3h-3zM685 462h3v3h-3zM1637 447h3v3h-3zM1608 622h3v3h-3zM588 1020h3v3h-3zM877 1069h3v3h-3z" fill="#fff"/>
                    <path d="M912 653L1201 694L1198 710L909 669z" fill="#c400c0" stroke="#ff8000" stroke-width="2"/>
                </svg>

                <!-- Strukturbaum -->
                <div class="tree">
                    <div class="row root"><svg class="node"><use href="#t-part"/></svg><span class="label">Part3</span></div>
                    <ul>
                        <li><div class="row"><svg class="node"><use href="#t-plane"/></svg><span class="label">xy-Ebene</span></div></li>
                        <li><div class="row"><svg class="node"><use href="#t-plane"/></svg><span class="label">yz-Ebene</span></div></li>
                        <li><div class="row"><svg class="node"><use href="#t-plane"/></svg><span class="label">zx-Ebene</span></div></li>
                        <li>
                            <div class="row"><button class="expander" aria-label="Hauptkörper zuklappen"><svg><use href="#i-minus"/></svg></button><svg class="node"><use href="#t-body"/></svg><span class="label">Hauptkörper</span></div>
                            <ul>
                                <li><div class="row"><button class="expander" aria-label="jwl065.1 aufklappen"><svg><use href="#i-plus"/></svg></button><svg class="node"><use href="#t-hidden"/></svg><span class="label">jwl065.1</span></div></li>
                                <li><div class="row"><svg class="node"><use href="#t-spline"/></svg><span class="label">Spline.1</span></div></li>
                                <li><div class="row"><svg class="node"><use href="#t-pad"/></svg><span class="label">Block.2</span></div></li>
                                <li><div class="row"><button class="expander" aria-label="Punkt.1 aufklappen"><svg><use href="#i-plus"/></svg></button><svg class="node"><use href="#t-point"/></svg><span class="label">Punkt.1</span></div></li>
                                <li><div class="row"><button class="expander" aria-label="Skalieren.1 aufklappen"><svg><use href="#i-plus"/></svg></button><svg class="node"><use href="#t-scale"/></svg><span class="label">Skalieren.1</span></div></li>
                                <li><div class="row"><button class="expander" aria-label="Punkt.2 aufklappen"><svg><use href="#i-plus"/></svg></button><svg class="node"><use href="#t-point"/></svg><span class="label">Punkt.2</span></div></li>
                                <li><div class="row"><button class="expander" aria-label="Kastenprofil_rechts.2 aufklappen"><svg><use href="#i-plus"/></svg></button><svg class="node"><use href="#t-hidden"/></svg><span class="label">Kastenprofil_rechts.2</span></div></li>
                                <li><div class="row"><button class="expander" aria-label="Kastenprofil_links.2 aufklappen"><svg><use href="#i-plus"/></svg></button><svg class="node"><use href="#t-hidden"/></svg><span class="label">Kastenprofil_links.2</span></div></li>
                                <li><div class="row"><button class="expander" aria-label="Ebene.3 aufklappen"><svg><use href="#i-plus"/></svg></button><svg class="node"><use href="#t-plane"/></svg><span class="label">Ebene.3</span></div></li>
                                <li><div class="row"><button class="expander" aria-label="Linie.1 aufklappen"><svg><use href="#i-plus"/></svg></button><svg class="node"><use href="#t-line"/></svg><span class="label">Linie.1</span></div></li>
                                <li><div class="row"><button class="expander" aria-label="Nut_außen.10 aufklappen"><svg><use href="#i-plus"/></svg></button><svg class="node"><use href="#t-hidden"/></svg><span class="label">Nut_außen.10</span></div></li>
                                <li><div class="row"><button class="expander" aria-label="Nut_innen.11 aufklappen"><svg><use href="#i-plus"/></svg></button><svg class="node"><use href="#t-hidden"/></svg><span class="label">Nut_innen.11</span></div></li>
                                <li>
                                    <div class="row"><button class="expander" aria-label="Block.3 zuklappen"><svg><use href="#i-minus"/></svg></button><svg class="node"><use href="#t-pad"/></svg><span class="label selected">Block.3</span></div>
                                    <ul>
                                        <li><div class="row"><button class="expander" aria-label="Skizze aufklappen"><svg><use href="#i-plus"/></svg></button><svg class="node"><use href="#t-sketch"/></svg><span class="label">Nut_außen.10</span></div></li>
                                    </ul>
                                </li>
                                <li><div class="row"><svg class="node"><use href="#t-remove"/></svg><span class="label">Teilfläche entfernen.2</span></div></li>
                            </ul>
                        </li>
                    </ul>
                </div>

                <!-- Kompass -->
                <svg class="compass" viewBox="0 0 100 110">
                    <path d="M46 17c22 4 40 22 35 51l-42-7z" fill="url(#p-teal)" stroke="#dcc8ff" stroke-width="2"/>
                    <path d="M46 17l-7 44" stroke="#dcc8ff" stroke-width="4"/>
                    <path d="M47 8L32 95M7 91c-2 4 0 4 8 6l47 7c4 0 2-2-3-3L14 91c-4-1-6-1-7 0z" fill="none" stroke="#dcc8ff" stroke-width="2"/>
                    <circle cx="48" cy="5" r="4" fill="#dcc8ff"/>
                    <path d="M27 93h9v9h-9z" fill="#d00000"/>
                    <text x="57" y="9">z</text>
                    <text x="50" y="68">x</text>
                    <text x="91" y="72">y</text>
                </svg>

                <!-- Netzmonitor -->
                <section class="monitor" aria-label="DSL-Monitor">
                    <div class="monitor-body">
                        <div class="monitor-tabs">
                            <button disabled>Start</button>
                            <button>Stopp</button>
                            <button disabled>Timer</button>
                            <button class="mini-menu">Menü</button>
                            <button class="mini" aria-label="Minimieren"><svg viewBox="0 0 8 8"><path d="M1 7h6" stroke="#000"/></svg></button>
                            <button class="mini" aria-label="Schließen"><svg viewBox="0 0 8 8"><path d="M1 1l6 6M7 1L1 7" stroke="#000"/></svg></button>
                        </div>
                        <div class="monitor-main">
                            <div class="graph"><b>50944</b><span>kBit/s</span></div>
                            <div class="level"></div>
                            <div class="modes"><button class="ip">IP</button><button class="ppp">PPP</button><em>DSL</em></div>
                        </div>
                        <div class="monitor-foot">
                            <div class="traffic">
                                <svg viewBox="0 0 18 10"><path d="M0 1h9v7H0z" fill="#b0d8f8" stroke="#203880"/><path d="M7 4h5V1l6 4-6 4V7H7z" fill="#20c870" stroke="#104030"/></svg>
                                <span>13</span>
                                <svg viewBox="0 0 18 10"><path d="M8 1h9v7H8z" fill="#b0d8f8" stroke="#203880"/><path d="M0 4h5V1l6 4-6 4V7H0z" fill="#20c870" stroke="#104030"/></svg>
                                <span>307</span>
                            </div>
                            <div class="clock">15:32</div>
                        </div>
                    </div>
                </section>

                <!-- Dialog -->
                <form class="dialog" aria-labelledby="dialog-title">
                    <div class="dialog-title">
                        <h2 id="dialog-title">Definition des Entfernens von Teilflächen</h2>
                        <div class="dialog-buttons">
                            <button type="button" aria-label="Hilfe">?</button>
                            <button type="button" class="wide" aria-label="Schließen"><svg viewBox="0 0 14 12"><path d="M2 1h3l2 3 2-3h3L9 6l3 5H9L7 8l-2 3H2l3-5z" fill="#fff" stroke="#555"/></svg></button>
                        </div>
                    </div>
                    <div class="dialog-body">
                        <svg class="planet" viewBox="0 0 46 34" aria-hidden="true">
                            <defs>
                                <radialGradient id="glow"><stop offset="0" stop-color="#ff9c20"/><stop offset="1" stop-color="#fce6c0" stop-opacity="0"/></radialGradient>
                                <linearGradient id="globe" x1="1" y1="0" x2="0" y2="1"><stop offset="0" stop-color="#c8e8f8"/><stop offset=".4" stop-color="#4888b0"/><stop offset="1" stop-color="#585048"/></linearGradient>
                            </defs>
                            <ellipse cx="24" cy="18" rx="24" ry="19" fill="url(#glow)"/>
                            <path d="M0 16c16-5 34 4 43 18H0z" fill="url(#globe)"/>
                        </svg>
                        <div class="field">
                            <label for="remove">Zu entfernende Teilflächen:</label>
                            <input id="remove" class="current" type="text" value="Block.3\Teilfläche.3">
                            <button type="button" class="pick" aria-label="Auswahlliste zu entfernende"><svg><use href="#i-pick"/></svg></button>
                        </div>
                        <div class="field">
                            <label for="keep">Beizubehaltende Teilflächen:</label>
                            <input id="keep" type="text" value="Keine Auswahl">
                            <button type="button" class="pick" aria-label="Auswahlliste beizubehaltende"><svg><use href="#i-pick"/></svg></button>
                        </div>
                        <div class="check">
                            <input id="show-all" type="checkbox">
                            <label for="show-all">Alle zu entfernenden Teilflächen anzeigen</label>
                        </div>
                        <div class="more"><button type="button" class="push">Mehr&gt;&gt;</button></div>
                        <div class="actions">
                            <button type="button" class="push default"><i class="lamp green"></i><span>OK</span></button>
                            <button type="button" class="push"><i class="lamp red"></i><span>Abbrechen</span></button>
                        </div>
                    </div>
                </form>
            </main>

            <aside class="side-bar">
                <div class="group first">
                    <button class="tool" aria-label="Part Design"><svg><use href="#i-gear"/></svg></button>
                </div>
                <div class="group">
                    <button class="tool more-tools" aria-label="Auswählen"><svg><use href="#i-select"/></svg></button>
                </div>
                <div class="group">
                    <button class="tool more-tools" aria-label="Skizze"><svg><use href="#i-sketch"/></svg></button>
                </div>
                <div class="group">
                    <button class="tool more-tools" aria-label="Block"><svg><use href="#t-pad"/></svg></button>
                    <button class="tool more-tools" aria-label="Tasche"><svg><use href="#i-pocket"/></svg></button>
                    <button class="tool" aria-label="Welle"><svg><use href="#i-shaft"/></svg></button>
                    <button class="tool" aria-label="Nut"><svg><use href="#i-groove"/></svg></button>
                    <button class="tool" aria-label="Bohrung"><svg><use href="#i-hole"/></svg></button>
                    <button class="tool" aria-label="Rippe"><svg><use href="#i-rib"/></svg></button>
                    <button class="tool" aria-label="Rille"><svg><use href="#i-slot"/></svg></button>
                    <button class="tool more-tools" aria-label="Versteifung"><svg><use href="#i-solid"/></svg></button>
                    <button class="tool" aria-label="Volumenkörper"><svg><use href="#i-loft"/></svg></button>
                    <button class="tool" aria-label="Entfernter Volumenkörper"><svg><use href="#i-unloft"/></svg></button>
                </div>
                <div class="group">
                    <button class="tool more-tools" aria-label="Kantenverrundung"><svg><use href="#i-fillet"/></svg></button>
                    <button class="tool" aria-label="Fase"><svg><use href="#i-chamfer"/></svg></button>
                    <button class="tool more-tools" aria-label="Auszugsschräge"><svg><use href="#i-draft"/></svg></button>
                    <button class="tool" aria-label="Schalenelement"><svg><use href="#i-shell"/></svg></button>
                    <button class="tool" aria-label="Aufmaß"><svg><use href="#i-thick"/></svg></button>
                    <button class="tool" aria-label="Gewinde"><svg><use href="#i-thread"/></svg></button>
                    <button class="tool more-tools" aria-label="Teilfläche entfernen"><svg><use href="#i-remove"/></svg></button>
                </div>
                <div class="group">
                    <button class="tool more-tools" aria-label="Fläche"><svg><use href="#i-surface"/></svg></button>
                </div>
                <div class="group">
                    <button class="tool more-tools" aria-label="Verschiebung"><svg><use href="#i-translate"/></svg></button>
                    <hr>
                    <button class="tool" aria-label="Spiegeln"><svg><use href="#i-mirror"/></svg></button>
                    <button class="tool more-tools" aria-label="Rechteckmuster"><svg><use href="#i-pattern"/></svg></button>
                    <hr>
                    <button class="tool more-tools" aria-label="Skalieren"><svg><use href="#t-scale"/></svg></button>
                </div>
                <div class="group">
                    <button class="tool" aria-label="Bedingungen im Dialog" disabled><svg><use href="#i-cgray"/></svg></button>
                    <button class="tool" aria-label="Bedingung"><svg><use href="#i-constr"/></svg></button>
                </div>
                <div class="group">
                    <button class="tool more-tools" aria-label="Text mit Bezugslinie"><svg viewBox="0 0 20 20"><text x="5" y="9" class="sym-mono">ABC</text><path d="M20 11H8l-6 5M2 12v4h4" fill="none" stroke="#101060"/></svg></button>
                    <button class="tool more-tools" aria-label="Referenzmarkierung"><svg><use href="#i-flag"/></svg></button>
                    <button class="tool" aria-label="Stempel"><svg><use href="#i-stamp"/></svg></button>
                </div>
            </aside>
        </div>

        <div class="tool-bar">
            <div class="group first">
                <button class="tool" aria-label="Neu"><svg><use href="#i-new"/></svg></button>
                <button class="tool" aria-label="Öffnen"><svg><use href="#i-open"/></svg></button>
                <button class="tool" aria-label="Sichern"><svg><use href="#i-save"/></svg></button>
                <button class="tool" aria-label="Drucken"><svg><use href="#i-print"/></svg></button>
                <button class="tool" aria-label="Ausschneiden" disabled><svg><use href="#i-cut"/></svg></button>
                <button class="tool" aria-label="Kopieren" disabled><svg><use href="#i-copy"/></svg></button>
                <button class="tool" aria-label="Einfügen"><svg><use href="#i-paste"/></svg></button>
                <button class="tool more-tools" aria-label="Widerrufen"><svg><use href="#i-undo"/></svg></button>
                <button class="tool more-tools" aria-label="Wiederholen" disabled><svg><use href="#i-redo"/></svg></button>
                <button class="tool" aria-label="Direkthilfe"><svg><use href="#i-what"/></svg></button>
            </div>
            <div class="group">
                <button class="tool" aria-label="Formel"><svg viewBox="0 0 20 20"><text class="sym-serif" x="0" y="16">f(x)</text></svg></button>
                <button class="tool" aria-label="Kommentar"><svg><use href="#i-note"/></svg></button>
                <button class="tool narrow" aria-label="Prüfung" disabled><svg><use href="#i-lamp"/></svg></button>
                <button class="tool more-tools" aria-label="Konstruktionstabelle"><svg><use href="#i-table"/></svg></button>
                <button class="tool more-tools" aria-label="Sperren"><svg><use href="#i-lock"/></svg></button>
                <button class="tool" aria-label="Äquivalente Abmessungen"><svg><use href="#i-list"/></svg></button>
            </div>
            <div class="group">
                <button class="tool" aria-label="Flugmodus"><svg><use href="#i-fly"/></svg></button>
                <button class="tool" aria-label="Alles einpassen"><svg><use href="#i-fit"/></svg></button>
                <button class="tool" aria-label="Schwenken"><svg><use href="#i-pan"/></svg></button>
                <button class="tool" aria-label="Drehen"><svg><use href="#i-rotate"/></svg></button>
                <button class="tool" aria-label="Vergrößern"><svg><use href="#i-zoomin"/></svg></button>
                <button class="tool" aria-label="Verkleinern"><svg><use href="#i-zoomout"/></svg></button>
                <button class="tool" aria-label="Senkrechte Ansicht"><svg><use href="#i-normal"/></svg></button>
                <button class="tool" aria-label="Mehrfachansicht"><svg><use href="#i-multi"/></svg></button>
                <button class="tool more-tools" aria-label="Isometrische Ansicht"><svg><use href="#i-cube"/></svg></button>
                <button class="tool more-tools" aria-label="Schattierung"><svg><use href="#i-shade"/></svg></button>
                <button class="tool" aria-label="Verdecken/Anzeigen"><svg><use href="#i-hide"/></svg></button>
                <button class="tool" aria-label="Sichtbaren Raum umschalten"><svg><use href="#i-swap"/></svg></button>
            </div>
            <div class="group">
                <button class="tool" aria-label="Material zuordnen"><svg><use href="#i-apply"/></svg></button>
            </div>
            <div class="group">
                <button class="tool" aria-label="Messen zwischen"><svg><use href="#i-measure"/></svg></button>
                <button class="tool" aria-label="Element messen"><svg><use href="#i-caliper"/></svg></button>
                <button class="tool" aria-label="Trägheit messen"><svg><use href="#i-weight"/></svg></button>
            </div>
            <div class="group">
                <button class="tool" aria-label="Aufnahme"><svg><use href="#i-camera"/></svg></button>
            </div>
            <div class="group">
                <button class="tool more-tools plain" aria-label="Alles aktualisieren"><svg><use href="#i-update"/></svg></button>
                <button class="tool" aria-label="Manuelle Aktualisierung"><svg><use href="#i-hand"/></svg></button>
                <button class="tool" aria-label="Achsensystem"><svg><use href="#i-axis"/></svg></button>
                <button class="tool" aria-label="Mittelwertabmessungen"><svg viewBox="0 0 20 20"><text x="0" y="9" class="sym-sans">10,1</text><text x="0" y="19" class="sym-sans">10,0</text></svg></button>
                <button class="tool more-tools" aria-label="In Bearbeitung definieren"><svg><use href="#i-defn"/></svg></button>
                <button class="tool" aria-label="Verknüpfung lösen"><svg><use href="#i-cutlink"/></svg></button>
                <button class="tool more-tools" aria-label="Baumstruktur"><svg><use href="#i-stack"/></svg></button>
                <button class="tool" aria-label="Katalog"><svg><use href="#i-cat"/></svg></button>
                <div class="combo">
                    <select aria-label="Aktueller Körper">
                        <option>Hauptkörper</option>
                    </select>
                </div>
            </div>
            <div class="group">
                <button class="tool" aria-label="Auszugsschrägenanalyse"><svg><use href="#i-draftan"/></svg></button>
                <button class="tool" aria-label="Krümmungsanalyse"><svg><use href="#i-curve"/></svg></button>
                <button class="tool" aria-label="Gewindeanalyse"><svg><use href="#i-tap"/></svg></button>
                <button class="tool" aria-label="Wandstärkenanalyse"><svg><use href="#i-beam"/></svg></button>
            </div>
            <div class="group">
                <button class="tool" aria-label="Körper einfügen"><svg><use href="#i-insert"/></svg></button>
            </div>
            <div class="group wide">
                <button class="tool more-tools" aria-label="Katalog erzeugen"><svg><use href="#i-paper"/></svg></button>
                <button class="tool more-tools" aria-label="PowerCopy"><svg><use href="#i-power"/></svg></button>
            </div>
            <div class="group">
                <button class="tool" aria-label="Punkt"><svg><use href="#i-point"/></svg></button>
                <button class="tool" aria-label="Linie"><svg><use href="#i-line"/></svg></button>
                <button class="tool" aria-label="Ebene"><svg><use href="#i-plane"/></svg></button>
            </div>
            <svg class="logo" viewBox="0 0 42 32" role="img" aria-label="CATIA">
                <path d="M9 1c5-1 8 0 8 2s-3 4-5 4c2 0 4 2 2 5" fill="none" stroke="#e02838" stroke-width="2"/>
                <path d="M5 13h5c7 0 3 10-4 9l-4 1 6-12" fill="none" stroke="#383088" stroke-width="2"/>
                <path d="M23 10c-6-1-9 2-5 5s2 7-4 6" fill="none" stroke="#f0a020" stroke-width="3"/>
                <text x="8" y="30">CATIA</text>
            </svg>
        </div>

        <footer class="status-bar">
            <p>Eine zu entfernende Teilfläche auswählen.</p>
            <input type="text" aria-label="Befehlseingabe">
            <button aria-label="Befehl"><svg viewBox="0 0 18 14"><path d="M3 2h7v7H3zM15 1v11H4M12 11h1" fill="none" stroke="#9090a0" stroke-width="1.500"/></svg></button>
            <button aria-label="Information"><svg viewBox="0 0 18 14"><circle cx="9" cy="6" r="5" fill="none" stroke="#9090a0" stroke-width="1.500"/><path d="M9 3v1M9 5v4M7 9h4M3 12h14V2" fill="none" stroke="#9090a0"/></svg></button>
        </footer>
    </div>
</body>
</html>
```

FILE: styles.css
```css
*,
*::before,
*::after {
    box-sizing: border-box;
}

body {
    margin: 0;
    font-family: "Noto Sans", "Open Sans", sans-serif;
    font-size: 11px;
    color: #101018;
    background-color: #cfcfe5;
}

button,
input,
select {
    font: inherit;
    color: inherit;
    margin: 0;
}

button {
    padding: 0;
    cursor: pointer;
}

.sprite {
    position: absolute;
    width: 0;
    height: 0;
}

.sym-serif {
    font-family: "Liberation Serif", serif;
    font-size: 13px;
    font-style: italic;
    font-weight: bold;
}

.sym-sans {
    font-family: "Liberation Sans", sans-serif;
    font-size: 10px;
    font-weight: bold;
    fill: #101060;
}

.sym-mono {
    font-family: "Liberation Mono", monospace;
    font-size: 8px;
    font-weight: bold;
    fill: #101060;
}

.window {
    display: flex;
    flex-direction: column;
    height: 100vh;
    overflow: hidden;
}

/* title bar */
.title-bar {
    display: flex;
    align-items: center;
    flex: none;
    height: 22px;
    padding: 0 3px 0 1px;
    background:
        radial-gradient(ellipse 240px 30px at 150px 12px, rgba(255, 255, 255, 0.6), transparent),
        radial-gradient(ellipse 26px 8px at 560px 18px, rgba(50, 50, 50, 0.5), transparent),
        radial-gradient(ellipse 40px 8px at 650px 18px, rgba(50, 50, 50, 0.5), transparent),
        radial-gradient(ellipse 50px 8px at 380px 18px, rgba(80, 80, 80, 0.5), transparent),
        radial-gradient(ellipse 60px 8px at 1020px 16px, rgba(90, 90, 90, 0.4), transparent),
        linear-gradient(to bottom, #8c8c8c, #a2a2a2 80%, #d4d4d4 90%, #555 96%);
}

.app-icon {
    width: 14px;
    height: 14px;
}

.title-bar h1 {
    flex: 1;
    margin: 0 0 0 6px;
    font-size: 11px;
    font-weight: normal;
    color: #000;
}

.window-buttons {
    display: flex;
    align-self: flex-start;
    height: 18px;
    border: 1px solid #333;
    border-top: 0;
    border-radius: 0 0 5px 5px;
    overflow: hidden;
}

.window-buttons button {
    display: grid;
    place-items: center;
    width: 27px;
    border: 0;
    border-right: 1px solid #444;
    background: linear-gradient(to bottom, #c4c4c4, #8e8e8e 50%, #707070 51%, #a0a0a0);
}

.window-buttons .close {
    width: 46px;
    border-right: 0;
    background: linear-gradient(to bottom, #e09080, #cc4830 50%, #a82008 51%, #d86848);
}

.window-buttons svg {
    width: 14px;
    height: 12px;
}

/* menu bar */
.menu-bar {
    display: flex;
    align-items: stretch;
    flex: none;
    height: 21px;
    background: linear-gradient(to right, #cdcde2, #d8daf0);
    border-bottom: 1px solid #8a8a94;
}

.doc-icon {
    align-self: center;
    width: 21px;
    height: 17px;
}

.menu-bar a {
    padding: 0 17px 0 7px;
    line-height: 20px;
    color: #101018;
    text-decoration: none;
}

.menu-bar .active {
    background-color: #fde6bf;
}

.mdi-buttons {
    display: flex;
    gap: 1px;
    margin-left: auto;
    padding: 1px;
}

.mdi-buttons button {
    display: grid;
    place-items: center;
    width: 18px;
    border: 1px solid #b4c4d8;
    background: linear-gradient(to bottom, #f6faff, #dbe6f4);
}

.mdi-buttons svg {
    width: 10px;
    height: 10px;
}

/* workspace */
.workspace {
    display: flex;
    flex: 1;
    min-height: 0;
}

.scroll-track {
    display: flex;
    flex-direction: column;
    width: 17px;
    border-left: 2px solid #8a8a94;
    border-right: 1px solid #30306a;
    background-color: #7878fc;
}

.scroll-track button {
    display: grid;
    place-items: center;
    height: 16px;
    border: 1px solid #4848b0;
    background-color: #7878fc;
}

.scroll-track svg {
    width: 10px;
    height: 10px;
}

.scroll-mesh {
    height: 17px;
    background: repeating-conic-gradient(#4444a4 0 25%, #7878fc 0 50%) 0 0 / 2px 2px;
}

.scroll-thumb {
    flex: 1;
    border-top: 1px solid #d8d8ff;
}

.viewport {
    position: relative;
    flex: 1;
    overflow: hidden;
    background-color: #333364;
}

.scene {
    display: block;
    width: 100%;
    height: 100%;
}

/* specification tree */
.tree {
    position: absolute;
    top: -13px;
    left: 1px;
    font-size: 12px;
    color: #fff;
}

.tree ul {
    margin: 0;
    padding: 0;
    list-style: none;
}

.tree ul ul {
    padding-left: 23px;
}

.tree li {
    position: relative;
}

.tree li::before {
    content: "";
    position: absolute;
    top: 0;
    bottom: 0;
    left: 6px;
    width: 2px;
    background-color: #fff;
}

.tree li:last-child::before {
    bottom: auto;
    height: 16px;
}

.row {
    position: relative;
    display: flex;
    align-items: center;
    height: 32px;
    padding-left: 21px;
}

.row::before {
    content: "";
    position: absolute;
    top: 15px;
    left: 7px;
    width: 13px;
    height: 2px;
    background-color: #fff;
}

.row.root {
    padding-left: 0;
}

.row.root::before {
    display: none;
}

.expander {
    position: absolute;
    left: 0;
    width: 14px;
    height: 14px;
    border: 0;
    background: none;
}

.expander svg {
    display: block;
    width: 14px;
    height: 14px;
}

.node {
    position: relative;
    width: 26px;
    height: 26px;
    shape-rendering: crispEdges;
}

.label {
    height: 21px;
    margin: 10px 0 0 4px;
    padding: 0 1px;
    line-height: 21px;
    white-space: nowrap;
    background-color: #363569;
    border-radius: 2px;
}

.label.selected {
    background-color: #ff8000;
    text-decoration: underline;
}

/* compass */
.compass {
    position: absolute;
    top: 7px;
    right: 34px;
    width: 100px;
    height: 110px;
    overflow: visible;
    fill: #ffff20;
    font-size: 13px;
}

/* monitor */
.monitor {
    position: absolute;
    top: 177px;
    right: 7px;
    width: 140px;
    padding: 5px;
    font-family: "Liberation Sans", Arial, sans-serif;
    font-size: 9px;
    background-color: #5e5e84;
    border: 1px solid #c8c8d8;
    border-radius: 6px;
    box-shadow: 0 0 0 1px #202038;
}

.monitor-body {
    display: flex;
    flex-direction: column;
    gap: 2px;
    padding: 2px;
    background-color: #eeeee8;
    border: 1px solid #222;
}

.monitor-tabs,
.monitor-main,
.monitor-foot {
    display: flex;
    gap: 3px;
}

.monitor-tabs {
    gap: 1px;
    height: 12px;
}

.monitor-tabs button {
    flex: none;
    padding: 0 1px;
    line-height: 11px;
    border: 0;
    border-right: 1px solid #999;
    background: none;
    color: #000;
}

.monitor-tabs button:disabled {
    color: #999;
}

.monitor-tabs .mini-menu {
    color: #103070;
    background-color: #f8e0b8;
}

.monitor-tabs .mini {
    flex: 1;
}

.mini svg {
    display: block;
    width: 8px;
    height: 8px;
}

.graph {
    display: flex;
    flex-direction: column;
    justify-content: space-between;
    flex: 1;
    height: 48px;
    padding-left: 1px;
    font-size: 8px;
    font-weight: bold;
    line-height: 9px;
    color: #102060;
    background:
        repeating-linear-gradient(to right, transparent 0 9px, #a8d0ec 9px 10px),
        repeating-linear-gradient(to bottom, transparent 0 7px, #a8d0ec 7px 8px),
        linear-gradient(to right, #fff, #b8e4fc);
}

.graph b {
    display: flex;
    align-items: center;
    gap: 2px;
}

.graph b::after {
    content: "";
    flex: 1;
    border-top: 1px dotted #1030c0;
}

.level {
    width: 10px;
    background: linear-gradient(to bottom, #f0d0e0 0 6px, #70b020 7px, #f8f000 50%, #ff6000);
    border: 1px solid #aaa;
}

.modes {
    display: flex;
    flex-direction: column;
    justify-content: space-between;
    width: 26px;
}

.modes button {
    height: 13px;
    line-height: 11px;
    border: 1px solid #88a;
    border-radius: 3px;
    color: #103060;
}

.modes .ip {
    background: linear-gradient(to right, #e0f0ff, #3080e0);
}

.modes .ppp {
    background: linear-gradient(to bottom, #b0f070, #40b010);
}

.modes em {
    font-size: 13px;
    line-height: 14px;
    color: #c0c0bc;
}

.traffic,
.clock {
    display: flex;
    align-items: center;
    justify-content: space-around;
    height: 12px;
    background-color: #b8e0f8;
    border: 1px solid #90a8c0;
}

.traffic {
    flex: 1;
}

.traffic svg {
    width: 18px;
    height: 10px;
}

.clock {
    width: 39px;
}

/* dialog */
.dialog {
    position: absolute;
    right: 4px;
    bottom: 4px;
    width: 380px;
    padding: 0 6px 6px;
    background: linear-gradient(to right, #a4a4bc, #8e8eaa);
    border: 1px solid #303040;
    border-radius: 6px;
    box-shadow: inset 0 0 0 1px #c4c4d8;
}

.dialog-title {
    display: flex;
    align-items: center;
    height: 28px;
}

.dialog-title h2 {
    flex: 1;
    margin: 0;
    font-size: 11px;
    font-weight: normal;
}

.dialog-buttons {
    display: flex;
    align-self: flex-start;
    height: 19px;
    border: 1px solid #c8c8dc;
    border-top: 0;
    border-radius: 0 0 4px 4px;
}

.dialog-buttons button {
    display: grid;
    place-items: center;
    width: 28px;
    font-size: 14px;
    font-weight: bold;
    line-height: 16px;
    color: #fff;
    text-shadow: 0 0 2px #000;
    border: 0;
    background: none;
}

.dialog-buttons .wide {
    width: 46px;
    border-left: 1px solid #c8c8dc;
}

.dialog-buttons svg {
    width: 14px;
    height: 12px;
}

.dialog-body {
    position: relative;
    display: flex;
    flex-direction: column;
    height: 152px;
    padding: 10px 8px 7px 11px;
    background-color: #fde6c1;
    border: 1px solid #444454;
}

.planet {
    position: absolute;
    left: 0;
    bottom: 0;
    width: 46px;
    height: 34px;
}

.field {
    display: flex;
    align-items: center;
    height: 26px;
    padding-right: 24px;
}

.field label {
    flex: 1;
    white-space: nowrap;
}

.field input {
    width: 146px;
    height: 19px;
    padding: 0 3px;
    border: 1px solid #808090;
    background-color: #fff;
}

.field .current {
    color: #fff;
    background-color: #3399ff;
    box-shadow: inset 0 0 0 1px #fff;
}

.pick {
    display: grid;
    place-items: center;
    width: 22px;
    height: 22px;
    margin-left: 1px;
    border: 2px solid;
    border-color: #fff #787888 #787888 #fff;
    background-color: #dcdcec;
}

.pick svg {
    width: 16px;
    height: 16px;
}

.check {
    display: flex;
    align-items: center;
    gap: 4px;
    height: 28px;
}

.check input {
    appearance: none;
    width: 12px;
    height: 12px;
    border: 1px solid #333;
    background-color: #ffffe4;
}

.more,
.actions {
    display: flex;
    justify-content: flex-end;
    gap: 8px;
}

.more {
    margin: 1px 0 8px;
}

.push {
    display: flex;
    align-items: center;
    justify-content: center;
    width: 88px;
    height: 21px;
    padding: 0 4px;
    border: 2px solid;
    border-color: #f4f4ff #707080 #707080 #f4f4ff;
    background-color: #cfcfe6;
}

.push span {
    flex: 1;
    text-align: center;
}

.push.default {
    border-color: #60606c;
    border-width: 1px 2px 2px 1px;
    box-shadow: inset 1px 1px 0 #fff;
}

.more .push {
    width: 59px;
}

.lamp {
    width: 12px;
    height: 12px;
    border-radius: 50%;
}

.lamp.green {
    background: radial-gradient(circle at 40% 30%, #e0ffe0, #20b020 40%, #006000);
}

.lamp.red {
    background: radial-gradient(circle at 40% 30%, #ffe0e0, #e03020 40%, #800000);
}

/* toolbars */
.tool {
    position: relative;
    flex: none;
    width: 28px;
    height: 28px;
    border: 0;
    background: none;
}

.tool svg {
    display: block;
    width: 20px;
    height: 20px;
    margin: 4px;
    overflow: visible;
    shape-rendering: crispEdges;
}

.tool.narrow {
    width: 22px;
}

.narrow svg {
    margin: 4px 1px;
}

.more-tools::after {
    content: "";
    position: absolute;
    top: 25px;
    left: 23px;
    border: 4px solid transparent;
    border-top-color: #000;
    border-bottom: 0;
}

.more-tools.plain::after {
    display: none;
}

.side-bar {
    display: flex;
    flex-direction: column;
    width: 38px;
    padding: 0 5px;
    background: linear-gradient(to right, #fff 0 3px, #e6e6f2 5px, #cfcfe6 14px, #cfcfe6 31px, #a4a4b8 36px, #d8d8e8);
}

.side-bar .group {
    display: flex;
    flex-direction: column;
}

.side-bar .group::before {
    content: "";
    width: 17px;
    height: 2px;
    margin: 7px 0 8px;
    border-top: 1px solid #fff;
    border-bottom: 1px solid #9898a8;
}

.side-bar .first {
    padding-bottom: 5px;
}

.side-bar .first::before {
    margin: 5px 0 4px;
}

.side-bar .more-tools {
    height: 30px;
    padding-bottom: 2px;
}

.side-bar hr {
    width: 34px;
    height: 2px;
    margin: 2px 0 4px;
    border: 0;
    border-top: 1px solid #9898a8;
    border-bottom: 1px solid #fff;
}

.tool-bar {
    display: flex;
    flex: none;
    height: 38px;
    padding: 0 8px 0 0;
    background: linear-gradient(to bottom, #fff 0 2px, #e6e6f4 5px, #d2d2e8 14px, #cfcfe6 26px, #a8a8bc 36px, #555 37px);
}

.tool-bar .group {
    display: flex;
    padding-top: 7px;
}

.tool-bar .group::before {
    content: "";
    width: 2px;
    height: 17px;
    margin: -2px 7px 0 10px;
    border-left: 1px solid #fff;
    border-right: 1px solid #9898a8;
}

.tool-bar .first::before {
    margin-left: 6px;
}

.tool-bar .wide {
    padding-right: 17px;
}

.tool-bar .more-tools {
    width: 30px;
    padding-right: 2px;
}

.combo {
    position: relative;
    width: 164px;
    height: 23px;
    margin: 3px 1px 0 2px;
}

.combo select {
    appearance: none;
    width: 100%;
    height: 23px;
    padding: 0 4px;
    border: 1px solid #707078;
    border-radius: 3px;
    background: linear-gradient(to bottom, #f2f2f2, #ebebeb 50%, #dcdcdc 51%, #cfcfcf);
}

.combo::after {
    content: "";
    position: absolute;
    top: 10px;
    right: 4px;
    border: 4px solid transparent;
    border-top-color: #000;
    border-bottom: 0;
    pointer-events: none;
}

.logo {
    width: 42px;
    height: 32px;
    margin: 1px 0 0 auto;
    font-family: "Liberation Sans", Arial, sans-serif;
    font-size: 10px;
    font-weight: bold;
    font-style: italic;
    fill: #383088;
}

/* status bar */
.status-bar {
    display: flex;
    align-items: center;
    flex: none;
    height: 24px;
    padding: 0 1px 0 3px;
    background-color: #cfcfe5;
}

.status-bar p {
    flex: 1;
    margin: 0;
}

.status-bar input {
    width: 300px;
    height: 19px;
    border: 0;
    border-top: 1px solid #9898a8;
    background-color: #fff;
}

.status-bar button {
    display: grid;
    place-items: center;
    width: 34px;
    height: 21px;
    border: 2px solid;
    border-color: #f4f4ff #808090 #808090 #f4f4ff;
    background-color: #cfcfe5;
}

.status-bar svg {
    width: 18px;
    height: 14px;
}
```
